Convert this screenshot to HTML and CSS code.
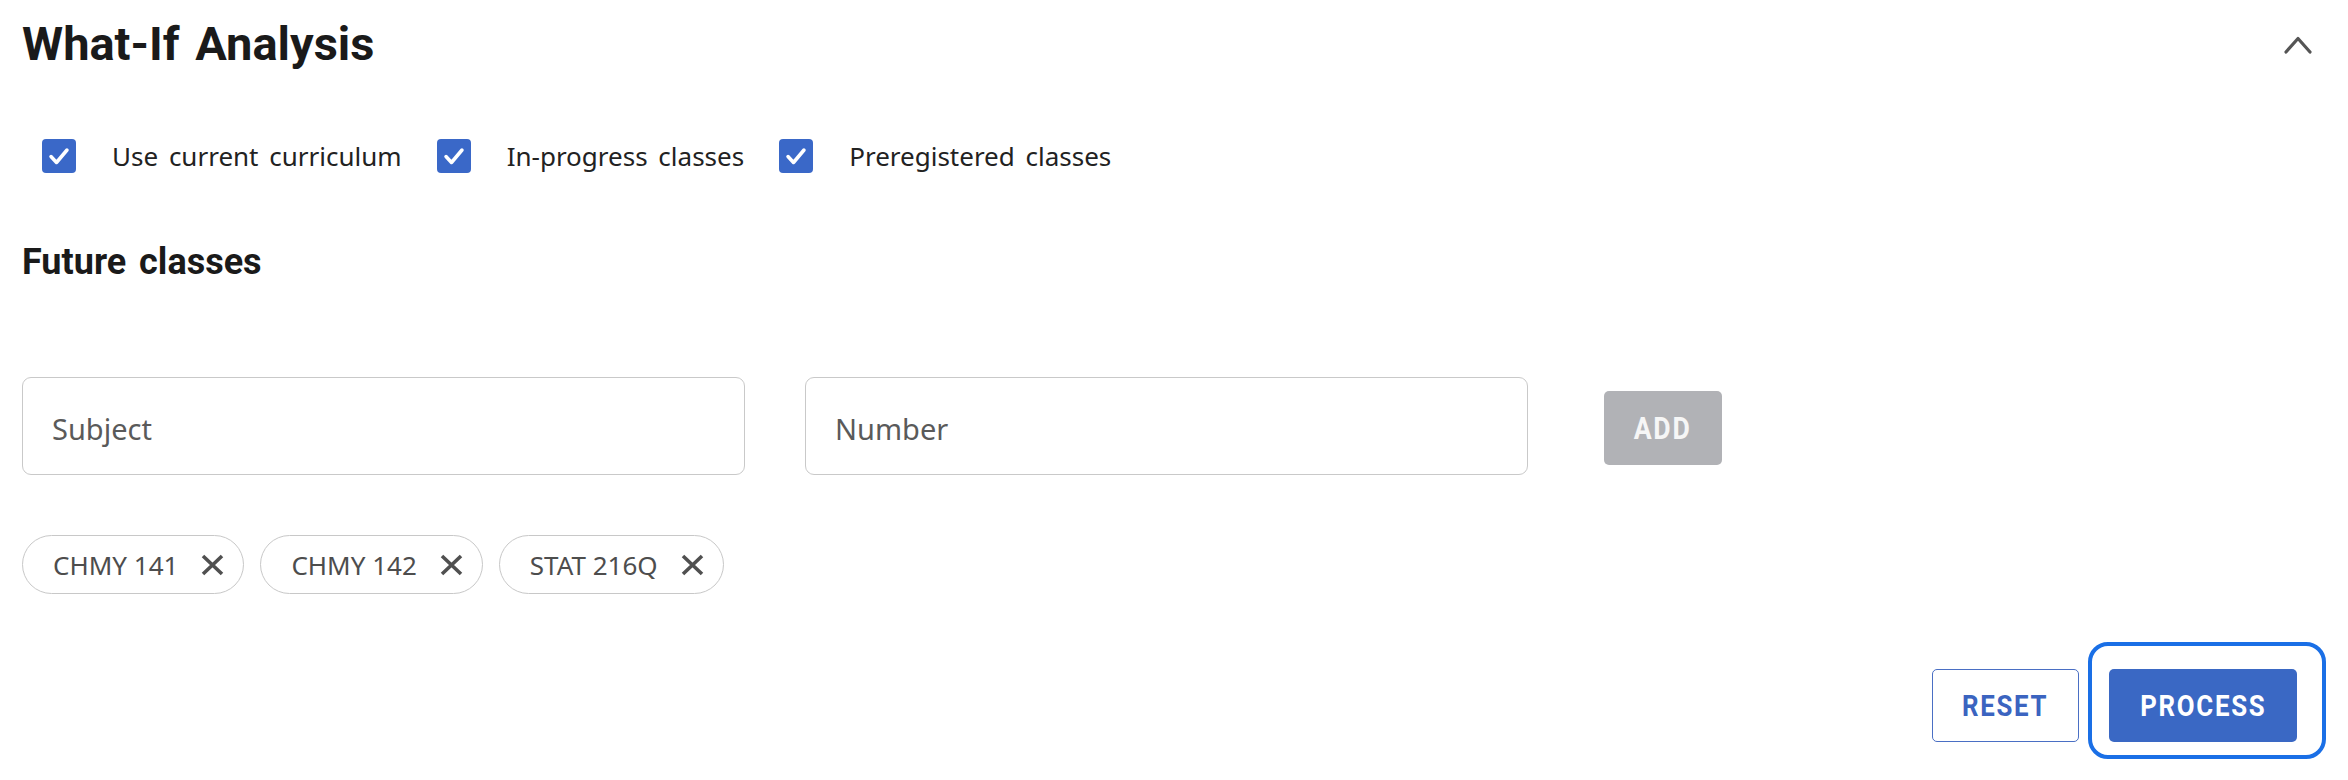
FILE: index.html
```html
<!DOCTYPE html>
<html lang="en">
<head>
<meta charset="utf-8">
<title>What-If Analysis</title>
<link rel="stylesheet" href="styles.css">
</head>
<body>
<section class="panel">
  <header class="head">
    <h1 class="title">What-If Analysis</h1>
    <button class="collapse" aria-label="Collapse">
      <svg width="28" height="19" viewBox="0 0 28 19"><path d="M2 17 L14 3.5 L26 17" fill="none" stroke="#555" stroke-width="3.2" stroke-linecap="round" stroke-linejoin="round"/></svg>
    </button>
  </header>

  <div class="checks">
    <label class="check">
      <span class="box"><svg width="34" height="34" viewBox="0 0 34 34"><path d="M9 17.5 L14.5 23.5 L25 11" fill="none" stroke="#fff" stroke-width="3.5" stroke-linecap="round" stroke-linejoin="round"/></svg></span>
      <span class="label">Use current curriculum</span>
    </label>
    <label class="check">
      <span class="box"><svg width="34" height="34" viewBox="0 0 34 34"><path d="M9 17.5 L14.5 23.5 L25 11" fill="none" stroke="#fff" stroke-width="3.5" stroke-linecap="round" stroke-linejoin="round"/></svg></span>
      <span class="label">In-progress classes</span>
    </label>
    <label class="check">
      <span class="box"><svg width="34" height="34" viewBox="0 0 34 34"><path d="M9 17.5 L14.5 23.5 L25 11" fill="none" stroke="#fff" stroke-width="3.5" stroke-linecap="round" stroke-linejoin="round"/></svg></span>
      <span class="label">Preregistered classes</span>
    </label>
  </div>

  <h2 class="sub">Future classes</h2>

  <div class="entry">
    <div class="field"><span class="placeholder">Subject</span></div>
    <div class="field"><span class="placeholder">Number</span></div>
    <button class="btn add"><span class="btn-text">ADD</span></button>
  </div>

  <div class="chips">
    <span class="chip"><span class="chip-text">CHMY 141</span><svg class="chip-x" width="25" height="22" viewBox="0 0 25 22"><path d="M3 2 L22 20 M22 2 L3 20" stroke="#505050" stroke-width="3.6"/></svg></span>
    <span class="chip"><span class="chip-text">CHMY 142</span><svg class="chip-x" width="25" height="22" viewBox="0 0 25 22"><path d="M3 2 L22 20 M22 2 L3 20" stroke="#505050" stroke-width="3.6"/></svg></span>
    <span class="chip"><span class="chip-text">STAT 216Q</span><svg class="chip-x" width="25" height="22" viewBox="0 0 25 22"><path d="M3 2 L22 20 M22 2 L3 20" stroke="#505050" stroke-width="3.6"/></svg></span>
  </div>

  <div class="actions">
    <button class="btn reset"><span class="btn-text">RESET</span></button>
    <button class="btn process"><span class="btn-text">PROCESS</span></button>
  </div>
</section>
</body>
</html>
```

FILE: styles.css
```css
* { box-sizing: border-box; }

html, body {
  margin: 0;
  padding: 0;
  background: #fff;
}

body {
  min-height: 780px;
  font-family: "Noto Sans", "Open Sans", sans-serif;
  color: #222;
}

.panel {
  padding: 16px 0 40px 22px;
}

.head {
  display: flex;
  align-items: center;
  justify-content: space-between;
  height: 56px;
}

.title {
  margin: 0;
  font-family: Roboto, "Liberation Sans", sans-serif;
  font-weight: 700;
  font-size: 47px;
  line-height: 56px;
  word-spacing: 4px;
  color: #1a1a1a;
}

.collapse {
  border: 0;
  background: none;
  padding: 0;
  margin-right: 36px;
  width: 28px;
  height: 19px;
  display: flex;
}

.checks {
  display: flex;
  align-items: center;
  margin-top: 67px;
  padding-left: 20px;
  height: 34px;
}

.check {
  display: flex;
  align-items: center;
  margin-right: 35px;
}

.box {
  width: 34px;
  height: 34px;
  border-radius: 4px;
  background: #3a68c8;
  display: flex;
}

.label {
  margin-left: 36px;
  font-size: 26px;
  line-height: 34px;
  word-spacing: 4px;
  color: #222;
}

.sub {
  margin: 68px 0 0;
  font-family: Roboto, "Liberation Sans", sans-serif;
  font-weight: 700;
  font-size: 36px;
  line-height: 42px;
  word-spacing: 4px;
  color: #1a1a1a;
}

.entry {
  display: flex;
  align-items: center;
  margin-top: 94px;
}

.field {
  width: 723px;
  height: 98px;
  border: 1.5px solid #c9c9c9;
  border-radius: 9px;
  display: flex;
  align-items: center;
  padding-left: 29px;
  margin-right: 60px;
}

.field + .field {
  margin-right: 76px;
}

.placeholder {
  font-size: 29px;
  color: #5a5a5a;
  padding-top: 4px;
}

.btn {
  border: 0;
  padding: 0;
  font-family: Roboto, "Liberation Sans", sans-serif;
  font-weight: 700;
  display: flex;
  align-items: center;
  justify-content: center;
  border-radius: 5px;
  height: 73px;
}

.btn-text {
  display: inline-block;
  transform: scaleX(0.86);
  letter-spacing: 2px;
}

.add {
  width: 118px;
  height: 74px;
  margin-top: 4px;
  background: #b1b2b6;
  color: #f6f6f6;
  font-size: 31px;
}

.chips {
  display: flex;
  gap: 16px;
  margin-top: 60px;
}

.chip {
  display: flex;
  align-items: center;
  height: 59px;
  border: 1.5px solid #c8c8c8;
  border-radius: 30px;
  padding: 0 18px 0 30px;
}

.chip-text {
  font-size: 26px;
  color: #4d4d4d;
}

.chip-x {
  margin-left: 22px;
}

.actions {
  display: flex;
  justify-content: flex-end;
  gap: 30px;
  margin-top: 75px;
  padding-right: 51px;
}

.reset {
  width: 147px;
  background: #fff;
  border: 1.5px solid #4a6fc4;
  color: #3b64c0;
  font-size: 30px;
}

.process {
  position: relative;
  width: 188px;
  background: #3a68c4;
  color: #fff;
  font-size: 30px;
}

.process::after {
  content: "";
  position: absolute;
  top: -27px;
  right: -29px;
  bottom: -17px;
  left: -21px;
  border: 4px solid #1a6fe6;
  border-radius: 20px;
  pointer-events: none;
}
```
